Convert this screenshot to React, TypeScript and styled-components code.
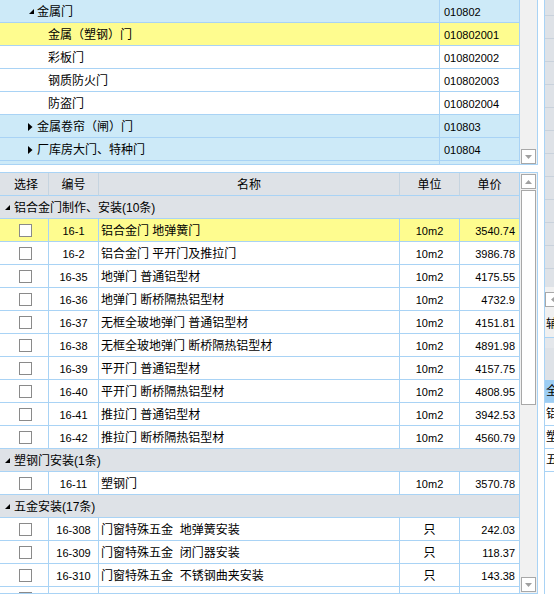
import React from 'react';
import styled, { createGlobalStyle } from 'styled-components';

const LINE = '#a9d3f5';
const TREE_BG = '#cdeaf8';
const SELECTED = '#fefc8f';
const GRAY = '#dee2e7';
const TRACK = '#f1f1f1';

const GlobalStyle = createGlobalStyle`
  html, body {
    margin: 0;
    padding: 0;
    background: #fff;
  }
  body {
    font-family: "Liberation Sans", "Noto Sans CJK SC", sans-serif;
    font-size: 12px;
    color: #000;
  }
`;

type TreeItem = {
  name: string;
  code: string;
  level: 1 | 2;
  expanded?: boolean;
  selected?: boolean;
};

const treeItems: TreeItem[] = [
  { name: '金属门', code: '010802', level: 1, expanded: true },
  { name: '金属（塑钢）门', code: '010802001', level: 2, selected: true },
  { name: '彩板门', code: '010802002', level: 2 },
  { name: '钢质防火门', code: '010802003', level: 2 },
  { name: '防盗门', code: '010802004', level: 2 },
  { name: '金属卷帘（闸）门', code: '010803', level: 1, expanded: false },
  { name: '厂库房大门、特种门', code: '010804', level: 1, expanded: false },
  { name: '', code: '', level: 1 },
];

type Quota = {
  code: string;
  name: string;
  unit: string;
  price: string;
  selected?: boolean;
};

type QuotaGroup = {
  title: string;
  items: Quota[];
};

const groups: QuotaGroup[] = [
  {
    title: '铝合金门制作、安装(10条)',
    items: [
      { code: '16-1', name: '铝合金门 地弹簧门', unit: '10m2', price: '3540.74', selected: true },
      { code: '16-2', name: '铝合金门 平开门及推拉门', unit: '10m2', price: '3986.78' },
      { code: '16-35', name: '地弹门 普通铝型材', unit: '10m2', price: '4175.55' },
      { code: '16-36', name: '地弹门 断桥隔热铝型材', unit: '10m2', price: '4732.9' },
      { code: '16-37', name: '无框全玻地弹门 普通铝型材', unit: '10m2', price: '4151.81' },
      { code: '16-38', name: '无框全玻地弹门 断桥隔热铝型材', unit: '10m2', price: '4891.98' },
      { code: '16-39', name: '平开门 普通铝型材', unit: '10m2', price: '4157.75' },
      { code: '16-40', name: '平开门 断桥隔热铝型材', unit: '10m2', price: '4808.95' },
      { code: '16-41', name: '推拉门 普通铝型材', unit: '10m2', price: '3942.53' },
      { code: '16-42', name: '推拉门 断桥隔热铝型材', unit: '10m2', price: '4560.79' },
    ],
  },
  {
    title: '塑钢门安装(1条)',
    items: [{ code: '16-11', name: '塑钢门', unit: '10m2', price: '3570.78' }],
  },
  {
    title: '五金安装(17条)',
    items: [
      { code: '16-308', name: '门窗特殊五金  地弹簧安装', unit: '只', price: '242.03' },
      { code: '16-309', name: '门窗特殊五金  闭门器安装', unit: '只', price: '118.37' },
      { code: '16-310', name: '门窗特殊五金  不锈钢曲夹安装', unit: '只', price: '143.38' },
    ],
  },
];

const sideItems = [
  { label: '全部', active: true },
  { label: '铝合金门制作、安装' },
  { label: '塑钢门安装' },
  { label: '五金安装' },
];

const Page = styled.div`
  display: flex;
  width: 554px;
  height: 594px;
  overflow: hidden;
  background: #fff;
`;

const MainColumn = styled.div`
  display: flex;
  flex-direction: column;
  width: 538px;
  flex-shrink: 0;
`;

const TreePanel = styled.div`
  display: flex;
  height: 165px;
  box-sizing: border-box;
  border-right: 1px solid ${LINE};
  border-bottom: 1px solid ${LINE};
`;

const ListPanel = styled.div`
  display: flex;
  margin-top: 7px;
  flex: 1;
  min-height: 0;
  box-sizing: border-box;
  border-top: 1px solid ${LINE};
  border-right: 1px solid ${LINE};
  border-bottom: 1px solid ${LINE};
`;

const GridBody = styled.div`
  width: 520px;
  flex-shrink: 0;
  overflow: hidden;
`;

const TreeRow = styled.div<{ $bg: string }>`
  display: grid;
  grid-template-columns: 440px 80px;
  height: 23px;
  background: ${(p) => p.$bg};
`;

const ListRow = styled.div<{ $bg: string }>`
  display: grid;
  grid-template-columns: 49px 50px 301px 60px 60px;
  height: 23px;
  background: ${(p) => p.$bg};
`;

const Cell = styled.div<{ $align?: 'flex-start' | 'center' | 'flex-end'; $pl?: number; $pr?: number; $line?: string }>`
  box-sizing: border-box;
  display: flex;
  align-items: center;
  justify-content: ${(p) => p.$align ?? 'flex-start'};
  padding: 1px ${(p) => p.$pr ?? 0}px 0 ${(p) => p.$pl ?? 0}px;
  border-right: 1px solid ${(p) => p.$line ?? LINE};
  border-bottom: 1px solid ${LINE};
  white-space: pre;
  overflow: hidden;
  line-height: 20px;
`;

const GroupRow = styled.div`
  display: flex;
  align-items: center;
  height: 23px;
  box-sizing: border-box;
  padding: 1px 0 0 4px;
  background: ${GRAY};
  border-right: 1px solid ${LINE};
  border-bottom: 1px solid ${LINE};
  white-space: nowrap;
  line-height: 20px;
`;

const Num = styled.span`
  font-family: "Liberation Sans", sans-serif;
  font-size: 11px;
`;

const CaretBox = styled.span<{ $w: number; $offset: number }>`
  display: inline-flex;
  align-items: center;
  width: ${(p) => p.$w}px;
  padding-left: ${(p) => p.$offset}px;
  box-sizing: border-box;
  flex-shrink: 0;
`;

const CheckBox = styled.span`
  width: 13px;
  height: 13px;
  box-sizing: border-box;
  margin-left: 3px;
  border: 1px solid #8a8a8a;
  background: #fff;
`;

const ScrollTrack = styled.div<{ $flushEnd?: boolean }>`
  display: flex;
  flex-direction: column;
  align-items: center;
  width: 17px;
  flex-shrink: 0;
  box-sizing: border-box;
  padding: 1px 0 ${(p) => (p.$flushEnd ? 0 : 1)}px;
  gap: 1px;
  background: ${TRACK};
`;

const ScrollButton = styled.div<{ $end?: boolean }>`
  display: flex;
  align-items: center;
  justify-content: center;
  width: 15px;
  height: 15px;
  flex-shrink: 0;
  box-sizing: border-box;
  margin-top: ${(p) => (p.$end ? 'auto' : '0')};
  border: 1px solid #a8a8a8;
  background: #fff;
`;

const ScrollThumb = styled.div<{ $h: number }>`
  width: 15px;
  height: ${(p) => p.$h}px;
  flex-shrink: 0;
  box-sizing: border-box;
  border: 1px solid #a8a8a8;
  background: #fff;
`;

const SidePane = styled.div`
  display: flex;
  flex-direction: column;
  flex: 1;
  min-width: 0;
  margin-left: 6px;
  border-left: 1px solid ${LINE};
  overflow: hidden;
`;

const SideStripes = styled.div`
  height: 287px;
  flex-shrink: 0;
  background: repeating-linear-gradient(
    to bottom,
    ${GRAY} 0px,
    ${GRAY} 22px,
    #c9d2dc 22px,
    #c9d2dc 23px
  );
  background-position: 0 -7px;
`;

const SideScroll = styled.div`
  display: flex;
  align-items: center;
  height: 23px;
  flex-shrink: 0;
  background: ${TRACK};
  padding-top: 1px;
  box-sizing: border-box;
`;

const SideLabel = styled.div`
  height: 28px;
  flex-shrink: 0;
  box-sizing: border-box;
  padding: 3px 0 0 1px;
  background: #f0f0f0;
  border-bottom: 1px solid ${LINE};
  white-space: nowrap;
  line-height: 22px;
`;

const SideHeader = styled.div`
  height: 42px;
  flex-shrink: 0;
  background: ${GRAY};
  border-top: 10px solid #e4e7eb;
  box-sizing: border-box;
`;

const SideItem = styled.div<{ $active?: boolean }>`
  height: 23px;
  flex-shrink: 0;
  box-sizing: border-box;
  padding: 1px 0 0 1px;
  line-height: 20px;
  white-space: nowrap;
  background: ${(p) => (p.$active ? '#9ccdf3' : '#fff')};
  border-bottom: 1px solid ${LINE};
`;

const Caret: React.FC<{ open: boolean }> = ({ open }) =>
  open ? (
    <svg width="5" height="5" viewBox="0 0 5 5">
      <polygon points="5,0 5,5 0,5" fill="#000" />
    </svg>
  ) : (
    <svg width="5" height="8" viewBox="0 0 5 8">
      <polygon points="0,0 4.5,4 0,8" fill="#000" />
    </svg>
  );

const Arrow: React.FC<{ dir: 'up' | 'down' | 'left' }> = ({ dir }) => {
  const points = dir === 'up' ? '0,4 3.5,0 7,4' : dir === 'down' ? '0,0 7,0 3.5,4' : '4,0 4,7 0,3.5';
  const w = dir === 'left' ? 4 : 7;
  const h = dir === 'left' ? 7 : 4;
  return (
    <svg width={w} height={h} viewBox={`0 0 ${w} ${h}`}>
      <polygon points={points} fill="#a0a0a0" />
    </svg>
  );
};

const App: React.FC = () => {
  return (
    <>
      <GlobalStyle />
      <Page>
        <MainColumn>
          <TreePanel>
            <GridBody>
              {treeItems.map((item, i) => (
                <TreeRow
                  key={i}
                  $bg={item.selected ? SELECTED : item.level === 1 ? TREE_BG : '#fff'}
                >
                  <Cell $pl={item.level === 1 ? 28 : 48}>
                    {item.level === 1 && item.name && (
                      <CaretBox $w={9} $offset={item.expanded ? 1 : 0}>
                        <Caret open={!!item.expanded} />
                      </CaretBox>
                    )}
                    {item.name}
                  </Cell>
                  <Cell $pl={4}>
                    <Num>{item.code}</Num>
                  </Cell>
                </TreeRow>
              ))}
            </GridBody>
            <ScrollTrack $flushEnd>
              <ScrollButton $end>
                <Arrow dir="down" />
              </ScrollButton>
            </ScrollTrack>
          </TreePanel>

          <ListPanel>
            <GridBody>
              <ListRow $bg={GRAY}>
                <Cell $align="center" $pl={4} $line="#c6d4e0">选择</Cell>
                <Cell $align="center" $line="#c6d4e0">编号</Cell>
                <Cell $align="center" $line="#c6d4e0">名称</Cell>
                <Cell $align="center" $line="#c6d4e0">单位</Cell>
                <Cell $align="center" $line={LINE}>单价</Cell>
              </ListRow>
              {groups.map((group) => (
                <React.Fragment key={group.title}>
                  <GroupRow>
                    <CaretBox $w={10} $offset={1}>
                      <Caret open />
                    </CaretBox>
                    {group.title}
                  </GroupRow>
                  {group.items.map((q) => (
                    <ListRow key={q.code} $bg={q.selected ? SELECTED : '#fff'}>
                      <Cell $align="center">
                        <CheckBox />
                      </Cell>
                      <Cell $align="center">
                        <Num>{q.code}</Num>
                      </Cell>
                      <Cell $pl={2}>{q.name}</Cell>
                      <Cell $align="center">
                        {q.unit === '只' ? q.unit : <Num>{q.unit}</Num>}
                      </Cell>
                      <Cell $align="flex-end" $pr={4}>
                        <Num>{q.price}</Num>
                      </Cell>
                    </ListRow>
                  ))}
                </React.Fragment>
              ))}
              <ListRow $bg="#fff">
                <Cell $align="center">
                  <CheckBox />
                </Cell>
                <Cell />
                <Cell />
                <Cell />
                <Cell />
              </ListRow>
            </GridBody>
            <ScrollTrack>
              <ScrollButton>
                <Arrow dir="up" />
              </ScrollButton>
              <ScrollThumb $h={215} />
              <ScrollButton $end>
                <Arrow dir="down" />
              </ScrollButton>
            </ScrollTrack>
          </ListPanel>
        </MainColumn>

        <SidePane>
          <SideStripes />
          <SideScroll>
            <ScrollButton>
              <Arrow dir="left" />
            </ScrollButton>
          </SideScroll>
          <SideLabel>辅助定额</SideLabel>
          <SideHeader />
          {sideItems.map((s) => (
            <SideItem key={s.label} $active={s.active}>
              {s.label}
            </SideItem>
          ))}
        </SidePane>
      </Page>
    </>
  );
};

export default App;
